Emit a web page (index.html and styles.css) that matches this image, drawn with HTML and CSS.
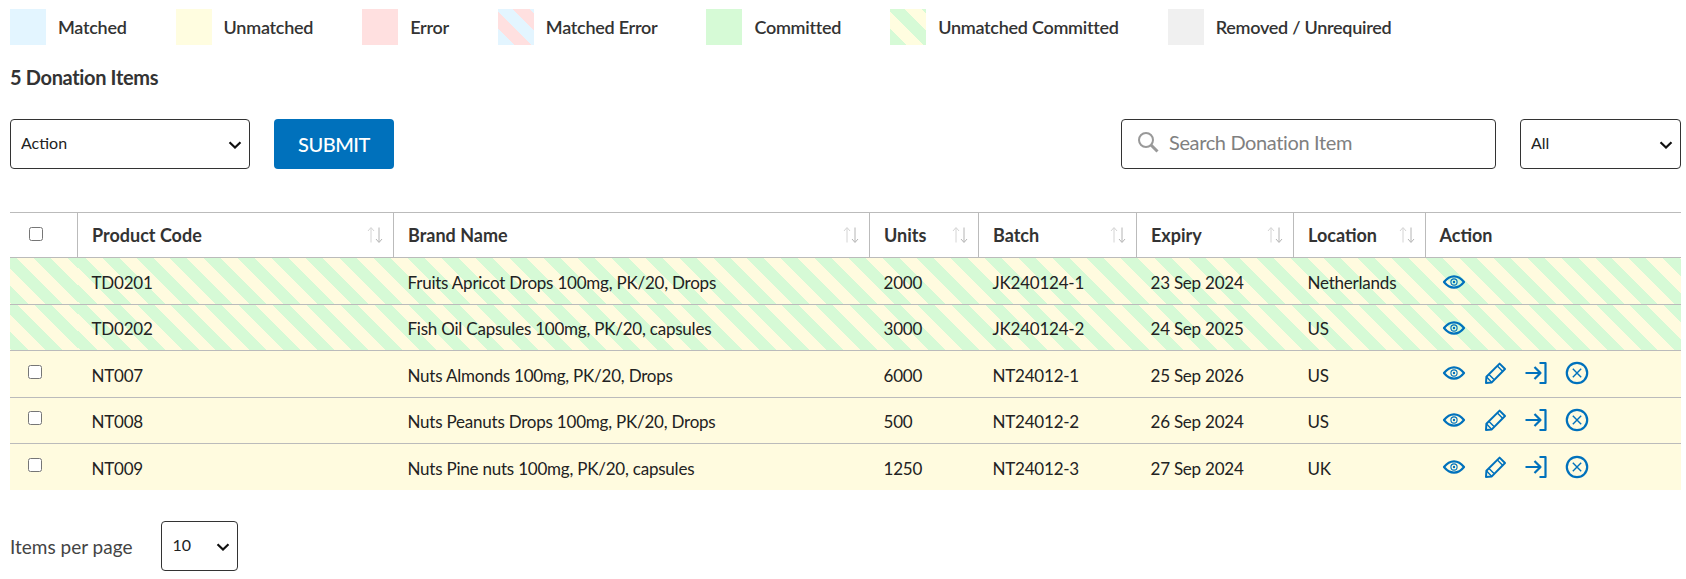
FILE: index.html
```html
<!DOCTYPE html>
<html lang="en">
<head>
<meta charset="utf-8">
<title>Donation Items</title>
<link rel="stylesheet" href="styles.css">
</head>
<body>
<svg class="defs" width="0" height="0" aria-hidden="true">
  <defs>
    <symbol id="eye" viewBox="0 0 24 24">
      <path d="M2 12 C5.5 7.6 8.6 6.4 12 6.4 C15.4 6.4 18.5 7.6 22 12 C18.5 16.4 15.4 17.6 12 17.6 C8.6 17.6 5.5 16.4 2 12 Z" fill="none" stroke="currentColor" stroke-width="2.2" stroke-linejoin="round"/>
      <circle cx="12" cy="12" r="3.1" fill="none" stroke="currentColor" stroke-width="1.1"/>
      <circle cx="12" cy="12" r="1.2" fill="currentColor"/>
    </symbol>
    <symbol id="pencil" viewBox="0 0 24 24">
      <path d="M3 22 L3.4 15.8 L16.6 2.6 L22 8 L8.8 21.4 Z" fill="none" stroke="currentColor" stroke-width="2" stroke-linejoin="round"/>
      <path d="M14.4 5 L19.6 10.2 M6 13.4 L11 18.6 M3.4 15.8 L8.8 21.4" fill="none" stroke="currentColor" stroke-width="1.4"/>
    </symbol>
    <symbol id="login" viewBox="0 0 24 24">
      <path d="M1.5 12 H16 M10.5 6 L16.5 12 L10.5 18 M15.5 2 H21.5 V22 H15.5" fill="none" stroke="currentColor" stroke-width="2.2" stroke-linejoin="round"/>
    </symbol>
    <symbol id="cancel" viewBox="0 0 24 24">
      <circle cx="12" cy="12" r="10.2" fill="none" stroke="currentColor" stroke-width="2.2"/>
      <path d="M7.8 7.8 L16.2 16.2 M16.2 7.8 L7.8 16.2" fill="none" stroke="currentColor" stroke-width="1.4"/>
    </symbol>
    <symbol id="sort" viewBox="0 0 18 18">
      <path d="M5 16.5 V2 M2 5 L5 1.5 L8 5" fill="none" stroke="#d4d4d4" stroke-width="1"/>
      <path d="M13 1.5 V16 M10 13 L13 16.5 L16 13" fill="none" stroke="#b4b4b4" stroke-width="1"/>
    </symbol>
  </defs>
</svg>

<main class="page">
  <ul class="legend">
    <li class="legend-item"><span class="swatch matched"></span>Matched</li>
    <li class="legend-item"><span class="swatch unmatched"></span>Unmatched</li>
    <li class="legend-item"><span class="swatch error"></span>Error</li>
    <li class="legend-item"><span class="swatch matched-error"></span>Matched Error</li>
    <li class="legend-item"><span class="swatch committed"></span>Committed</li>
    <li class="legend-item"><span class="swatch unmatched-committed"></span>Unmatched Committed</li>
    <li class="legend-item"><span class="swatch removed"></span>Removed / Unrequired</li>
  </ul>

  <h2 class="count">5 Donation Items</h2>

  <div class="toolbar">
    <div class="toolbar-group">
      <select class="field action-select"><option>Action</option></select>
      <button class="submit" type="button">SUBMIT</button>
    </div>
    <div class="toolbar-group filters">
      <label class="search">
        <svg class="search-icon" viewBox="0 0 24 24" width="24" height="24"><circle cx="10" cy="10" r="7" fill="none" stroke="#999" stroke-width="2"/><path d="M15 15 L21.5 21.5" stroke="#999" stroke-width="3"/></svg>
        <input class="search-input" type="text" placeholder="Search Donation Item">
      </label>
      <select class="field all-select"><option>All</option></select>
    </div>
  </div>

  <table class="items">
    <colgroup>
      <col class="c-check"><col class="c-code"><col class="c-brand"><col class="c-units"><col class="c-batch"><col class="c-expiry"><col class="c-location"><col>
    </colgroup>
    <thead>
      <tr>
        <th class="check"><input type="checkbox"></th>
        <th><span class="th-in">Product Code<svg class="sort"><use href="#sort"/></svg></span></th>
        <th><span class="th-in">Brand Name<svg class="sort"><use href="#sort"/></svg></span></th>
        <th><span class="th-in">Units<svg class="sort"><use href="#sort"/></svg></span></th>
        <th><span class="th-in">Batch<svg class="sort"><use href="#sort"/></svg></span></th>
        <th><span class="th-in">Expiry<svg class="sort"><use href="#sort"/></svg></span></th>
        <th><span class="th-in">Location<svg class="sort"><use href="#sort"/></svg></span></th>
        <th>Action</th>
      </tr>
    </thead>
    <tbody>
      <tr class="row-striped">
        <td class="check"></td><td>TD0201</td><td>Fruits Apricot Drops 100mg, PK/20, Drops</td><td>2000</td><td>JK240124-1</td><td>23 Sep 2024</td><td>Netherlands</td>
        <td><div class="actions"><svg class="icon"><use href="#eye"/></svg></div></td>
      </tr>
      <tr class="row-striped">
        <td class="check"></td><td>TD0202</td><td>Fish Oil Capsules 100mg, PK/20, capsules</td><td>3000</td><td>JK240124-2</td><td>24 Sep 2025</td><td>US</td>
        <td><div class="actions"><svg class="icon"><use href="#eye"/></svg></div></td>
      </tr>
      <tr class="row-unmatched">
        <td class="check"><input type="checkbox"></td><td>NT007</td><td>Nuts Almonds 100mg, PK/20, Drops</td><td>6000</td><td>NT24012-1</td><td>25 Sep 2026</td><td>US</td>
        <td><div class="actions"><svg class="icon"><use href="#eye"/></svg><svg class="icon"><use href="#pencil"/></svg><svg class="icon"><use href="#login"/></svg><svg class="icon"><use href="#cancel"/></svg></div></td>
      </tr>
      <tr class="row-unmatched">
        <td class="check"><input type="checkbox"></td><td>NT008</td><td>Nuts Peanuts Drops 100mg, PK/20, Drops</td><td>500</td><td>NT24012-2</td><td>26 Sep 2024</td><td>US</td>
        <td><div class="actions"><svg class="icon"><use href="#eye"/></svg><svg class="icon"><use href="#pencil"/></svg><svg class="icon"><use href="#login"/></svg><svg class="icon"><use href="#cancel"/></svg></div></td>
      </tr>
      <tr class="row-unmatched">
        <td class="check"><input type="checkbox"></td><td>NT009</td><td>Nuts Pine nuts 100mg, PK/20, capsules</td><td>1250</td><td>NT24012-3</td><td>27 Sep 2024</td><td>UK</td>
        <td><div class="actions"><svg class="icon"><use href="#eye"/></svg><svg class="icon"><use href="#pencil"/></svg><svg class="icon"><use href="#login"/></svg><svg class="icon"><use href="#cancel"/></svg></div></td>
      </tr>
    </tbody>
  </table>

  <div class="pager">
    <span class="pager-label">Items per page</span>
    <select class="field per-page"><option>10</option></select>
  </div>
</main>
</body>
</html>
```

FILE: styles.css
```css
* { box-sizing: border-box; }
html, body { margin: 0; background: #fff; }
body { font-family: Lato, "Liberation Sans", sans-serif; color: #333; font-size: 16px; }
.defs { position: absolute; }
.page { padding: 9px 5px 0 10px; }

.legend { display: flex; gap: 49px; list-style: none; margin: 0; padding: 0; }
.legend-item { display: flex; align-items: center; gap: 12px; font-weight: 600; font-size: 18px; letter-spacing: -0.27px; height: 36px; }
.swatch { width: 36px; height: 36px; flex: none; }
.matched { background: #e3f5ff; }
.unmatched { background: #fffde0; }
.error { background: #ffe0e0; }
.committed { background: #d6fad6; }
.removed { background: #f0f0f0; }
.matched-error { background: repeating-linear-gradient(45deg, #e3f5ff, #e3f5ff 12px, #ffe0e0 12px, #ffe0e0 24px); }
.unmatched-committed { background: repeating-linear-gradient(45deg, #d6fad6, #d6fad6 12px, #fffde0 12px, #fffde0 24px); }

.count { margin: 21px 0 0; font-size: 20px; line-height: 22px; font-weight: 700; letter-spacing: -0.35px; color: #333; }

.toolbar { display: flex; justify-content: space-between; margin-top: 31px; }
.toolbar-group { display: flex; gap: 24px; }
.field {
  height: 50px; border: 1px solid #333; border-radius: 4px; color: #222;
  font-family: Lato, sans-serif; font-size: 16px; padding: 0 10px 3px;
  appearance: none; -webkit-appearance: none;
  background: #fff url("data:image/svg+xml,%3Csvg xmlns='http://www.w3.org/2000/svg' width='14' height='8' viewBox='0 0 14 8'%3E%3Cpath d='M1.5 1.2 L7 6.5 L12.5 1.2' fill='none' stroke='%23111' stroke-width='2.2'/%3E%3C/svg%3E") no-repeat right 7px top 21px;
}
.action-select { width: 240px; }
.all-select { width: 161px; }
.submit { width: 120px; height: 50px; border: 0; border-radius: 4px; background: #0071bc; color: #fff; font-family: Lato, sans-serif; font-size: 20px; font-weight: 500; letter-spacing: -0.5px; }
.search { display: flex; align-items: center; width: 375px; height: 50px; border: 1px solid #333; border-radius: 4px; padding: 0 10px 0 14px; gap: 9px; }
.search-icon { flex: none; margin-top: -5px; }
.search-input { flex: 1; min-width: 0; border: 0; outline: 0; background: transparent; font-family: Lato, sans-serif; font-size: 20px; letter-spacing: -0.37px; color: #333; padding: 0; margin-top: -4px; }
.search-input::placeholder { color: #808080; opacity: 1; }

.items { width: 100%; table-layout: fixed; border-collapse: collapse; margin-top: 43px; }
.c-check { width: 67.5px; }
.c-code { width: 316px; }
.c-brand { width: 476px; }
.c-units { width: 109px; }
.c-batch { width: 158px; }
.c-expiry { width: 157px; }
.c-location { width: 131.5px; }
.items th { height: 45px; padding: 0 14px; text-align: left; font-weight: 700; font-size: 18px; letter-spacing: 0; color: #333; border-top: 1px solid #bbb; border-bottom: 1px solid #bbb; border-left: 1px solid #bbb; }
.items th:first-child { border-left: 0; }
.items td { height: 46.5px; padding: 3px 14px 0; font-size: 17px; letter-spacing: -0.22px; color: #222; border-bottom: 1px solid #bbb; }
.items tbody tr:last-child td { border-bottom: 0; }
.items td.check { padding: 0 0 4px 18px; }
.items th.check { padding: 0 0 2px 19px; }
.items input[type="checkbox"] { margin: 0; width: 14px; height: 14px; display: block; }
.th-in { display: flex; justify-content: space-between; align-items: center; margin-right: -5px; }
.sort { width: 18px; height: 18px; flex: none; }
.row-striped { background: repeating-linear-gradient(45deg, #d6fad6 2px, #d6fad6 14px, #fffbdf 14px, #fffbdf 26px); }
.row-unmatched { background: #fffbdf; }
.actions { display: flex; gap: 17px; margin: -4px 0 0 3px; }
.row-striped .actions { margin-top: -1px; }
.icon { width: 24px; height: 24px; flex: none; color: #0071bc; }

.pager { display: flex; align-items: center; gap: 29px; margin-top: 31px; }
.pager-label { font-size: 19px; color: #444; }
.per-page { width: 77px; }
```
